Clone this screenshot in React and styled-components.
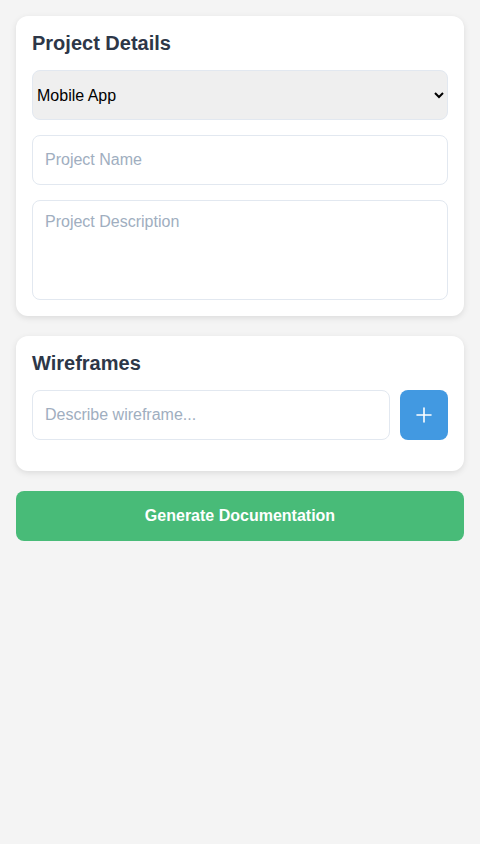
import React from 'react';
import styled, { createGlobalStyle } from 'styled-components';

const GlobalStyle = createGlobalStyle`
  body {
    margin: 0;
    background: #f4f4f4;
    font-family: "Liberation Sans", Arial, sans-serif;
  }
`;

const Page = styled.div`
  padding: 16px;
  display: flex;
  flex-direction: column;
  gap: 20px;
`;

const Card = styled.section`
  background: #fff;
  border-radius: 12px;
  padding: 16px;
  box-shadow: 0 2px 6px rgba(0, 0, 0, 0.1);
  display: flex;
  flex-direction: column;
  gap: 15px;
  padding-bottom: ${p => p.$bottom || 16}px;
`;

const Title = styled.h2`
  margin: 0;
  font-size: 20px;
  line-height: 23px;
  font-weight: 700;
  color: #2d3748;
`;

const Select = styled.select`
  height: 50px;
  width: 100%;
  box-sizing: border-box;
  padding: 0;
  border: 1px solid #e2e8f0;
  border-radius: 8px;
  background: #efefef;
  font-family: "Liberation Sans", Arial, sans-serif;
  font-size: 16px;
  color: #000;
`;

const Input = styled.input`
  height: 50px;
  width: 100%;
  box-sizing: border-box;
  padding: 0 12px;
  border: 1px solid #e2e8f0;
  border-radius: 8px;
  font-family: "Liberation Sans", Arial, sans-serif;
  font-size: 16px;
  color: #2d3748;
  &::placeholder { color: #a0aec0; }
`;

const TextArea = styled.textarea`
  height: 100px;
  width: 100%;
  box-sizing: border-box;
  padding: 12px;
  border: 1px solid #e2e8f0;
  border-radius: 8px;
  font-family: "Liberation Sans", Arial, sans-serif;
  font-size: 16px;
  line-height: 18px;
  resize: none;
  display: block;
  &::placeholder { color: #a0aec0; }
`;

const Row = styled.div`
  display: flex;
  gap: 10px;
`;

const AddButton = styled.button`
  flex: 0 0 48px;
  height: 50px;
  border: none;
  border-radius: 8px;
  background: #4299e1;
  display: flex;
  align-items: center;
  justify-content: center;
  padding: 0;
`;

const GenerateButton = styled.button`
  height: 50px;
  width: 100%;
  border: none;
  border-radius: 8px;
  background: #48bb78;
  color: #fff;
  font-family: "Liberation Sans", Arial, sans-serif;
  font-size: 16px;
  font-weight: 700;
`;

export default function App() {
  return (
    <>
      <GlobalStyle />
      <Page>
        <Card>
          <Title>Project Details</Title>
          <Select defaultValue="mobile">
            <option value="mobile">Mobile App</option>
            <option value="web">Web App</option>
          </Select>
          <Input placeholder="Project Name" />
          <TextArea placeholder="Project Description" />
        </Card>
        <Card $bottom={31}>
          <Title>Wireframes</Title>
          <Row>
            <Input placeholder="Describe wireframe..." />
            <AddButton aria-label="Add wireframe">
              <svg width="16" height="16" viewBox="0 0 16 16" fill="none" stroke="#fff" strokeWidth="1.6" strokeLinecap="round">
                <path d="M8 1v14M1 8h14" />
              </svg>
            </AddButton>
          </Row>
        </Card>
        <GenerateButton>Generate Documentation</GenerateButton>
      </Page>
    </>
  );
}
